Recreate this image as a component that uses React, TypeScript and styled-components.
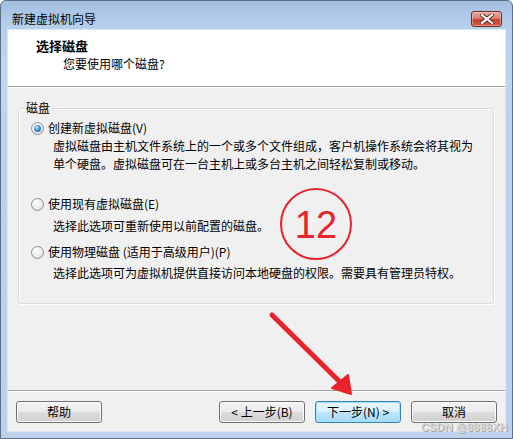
import React from 'react';
import styled, { createGlobalStyle, css } from 'styled-components';

const GlobalStyle = createGlobalStyle`
  html, body {
    margin: 0;
    padding: 0;
    background: #ffffff;
  }
  body {
    font-family: "Noto Sans CJK SC", "Liberation Sans", sans-serif;
    font-size: 12px;
    color: #000;
  }
`;

const Window = styled.div`
  position: relative;
  width: 513px;
  height: 439px;
  box-sizing: border-box;
  display: flex;
  flex-direction: column;
  border: 1px solid #5d6f86;
  border-radius: 6px 6px 0 0;
  background: linear-gradient(to bottom, #a3bfe1 0px, #b6cfeb 26px, #bdd4ed 60px, #bad2ec 100%);
  overflow: hidden;
`;

const TitleBar = styled.div`
  height: 29px;
  flex: none;
  display: flex;
  align-items: flex-start;
  justify-content: space-between;
  box-sizing: border-box;
  padding: 10px 10px 0 11px;
`;

const TitleText = styled.div`
  line-height: 16px;
  color: #000;
`;

const CloseButton = styled.div`
  width: 31px;
  height: 16px;
  box-sizing: border-box;
  border: 1px solid #6e2b22;
  border-radius: 3px;
  background: linear-gradient(to bottom, #e8a89b 0%, #d9806e 45%, #c2402c 55%, #cf5c43 100%);
  box-shadow: inset 0 0 0 1px rgba(255, 220, 210, 0.45);
  display: flex;
  align-items: center;
  justify-content: center;
`;

const Client = styled.div`
  flex: 1;
  margin: 0 7px 7px;
  display: flex;
  flex-direction: column;
  background: #f0f0f0;
  box-shadow: 0 0 0 1px #dce7f4;
`;

const Header = styled.div`
  height: 57px;
  flex: none;
  box-sizing: border-box;
  background: #ffffff;
  padding: 8px 0 0 28px;
  border-bottom: 1px solid #a0a0a0;
  box-shadow: 0 1px 0 #ffffff;
`;

const HeaderTitle = styled.div`
  font-size: 13px;
  font-weight: bold;
  line-height: 16px;
`;

const HeaderSub = styled.div`
  line-height: 16px;
  margin: 2px 0 0 27px;
`;

const Body = styled.div`
  flex: 1;
  padding: 13px 11px 0 10px;
`;

const Group = styled.fieldset`
  margin: 0;
  padding: 0 0 21px 0;
  border: 1px solid #d5dfe5;
  border-radius: 3px;
  box-shadow: inset 1px 1px 0 #ffffff, 1px 1px 0 #ffffff;
`;

const Legend = styled.legend`
  margin-left: 5px;
  padding: 0 2px;
  line-height: 16px;
`;

const Option = styled.div<{ $top: number }>`
  margin-top: ${(p) => p.$top}px;
`;

const RadioRow = styled.div`
  height: 18px;
  display: flex;
  align-items: center;
  gap: 4px;
  padding-left: 12px;
`;

const Radio = styled.span<{ $checked?: boolean }>`
  width: 13px;
  height: 13px;
  box-sizing: border-box;
  border-radius: 50%;
  border: 1px solid #8f8f8f;
  background: radial-gradient(circle at 40% 35%, #ffffff 0%, #f0f0f0 45%, #d2d2d2 100%);
  display: flex;
  align-items: center;
  justify-content: center;
  ${(p) =>
    p.$checked &&
    css`
      &::after {
        content: '';
        width: 7px;
        height: 7px;
        border-radius: 50%;
        background: radial-gradient(circle at 40% 35%, #c8ecff 0%, #3d95d3 45%, #1b5a8c 100%);
      }
    `}
`;

const Label = styled.span`
  line-height: 18px;
`;

const Desc = styled.div<{ $gap: number }>`
  margin-top: ${(p) => p.$gap}px;
  padding-left: 34px;
  line-height: 18px;
  white-space: nowrap;
`;

const Footer = styled.div`
  height: 41px;
  flex: none;
  box-sizing: border-box;
  border-top: 1px solid #a0a0a0;
  box-shadow: inset 0 1px 0 #ffffff;
  padding: 10px 8px 0 8px;
  display: flex;
  justify-content: space-between;
  align-items: flex-start;
`;

const ButtonGroup = styled.div`
  display: flex;
  gap: 10px;
`;

const Button = styled.div<{ $default?: boolean }>`
  width: 86px;
  height: 22px;
  box-sizing: border-box;
  border: 1px solid #707070;
  border-radius: 3px;
  background: linear-gradient(to bottom, #f2f2f2 0%, #ebebeb 50%, #dddddd 51%, #cfcfcf 100%);
  box-shadow: inset 0 0 0 1px #fcfcfc;
  display: flex;
  align-items: center;
  justify-content: center;
  line-height: 16px;
  ${(p) =>
    p.$default &&
    css`
      border-color: #3c7fb1;
      background: linear-gradient(to bottom, #eaf6fd 0%, #d9f0fc 50%, #bee6fd 51%, #a7d9f5 100%);
      box-shadow: inset 0 0 0 1px #9fe3fb;
    `}
`;

const Annotation = styled.svg`
  position: absolute;
  left: 0;
  top: 0;
  pointer-events: none;
`;

const Watermark = styled.div`
  position: absolute;
  right: 4px;
  bottom: 5px;
  font-family: "Liberation Sans", Arial, sans-serif;
  font-size: 11px;
  font-weight: bold;
  color: #d8d8d8;
  text-shadow: 1px 1px 0 #a8a8a8;
  letter-spacing: 0.2px;
`;

const options = [
  {
    label: '创建新虚拟磁盘(V)',
    lines: ['虚拟磁盘由主机文件系统上的一个或多个文件组成，客户机操作系统会将其视为', '单个硬盘。虚拟磁盘可在一台主机上或多台主机之间轻松复制或移动。'],
    checked: true,
    top: 3,
    gap: 0,
  },
  {
    label: '使用现有虚拟磁盘(E)',
    lines: ['选择此选项可重新使用以前配置的磁盘。'],
    top: 22,
    gap: 4,
  },
  {
    label: '使用物理磁盘 (适用于高级用户)(P)',
    lines: ['选择此选项可为虚拟机提供直接访问本地硬盘的权限。需要具有管理员特权。'],
    top: 8,
    gap: 3,
  },
];

export default function App() {
  return (
    <>
      <GlobalStyle />
      <Window>
        <TitleBar>
          <TitleText>新建虚拟机向导</TitleText>
          <CloseButton>
            <svg width="14" height="10" viewBox="0 0 14 10">
              <path d="M2 1 L12 9 M12 1 L2 9" stroke="#5a2a24" strokeWidth="4" strokeLinecap="square" />
              <path d="M2 1 L12 9 M12 1 L2 9" stroke="#ffffff" strokeWidth="2.2" strokeLinecap="square" />
            </svg>
          </CloseButton>
        </TitleBar>
        <Client>
          <Header>
            <HeaderTitle>选择磁盘</HeaderTitle>
            <HeaderSub>您要使用哪个磁盘?</HeaderSub>
          </Header>
          <Body>
            <Group>
              <Legend>磁盘</Legend>
              {options.map((o) => (
                <Option key={o.label} $top={o.top}>
                  <RadioRow>
                    <Radio $checked={o.checked} />
                    <Label>{o.label}</Label>
                  </RadioRow>
                  <Desc $gap={o.gap}>
                    {o.lines.map((l, i) => (
                      <div key={i}>{l}</div>
                    ))}
                  </Desc>
                </Option>
              ))}
            </Group>
          </Body>
          <Footer>
            <Button>帮助</Button>
            <ButtonGroup>
              <Button>&lt; 上一步(B)</Button>
              <Button $default>下一步(N) &gt;</Button>
              <Button>取消</Button>
            </ButtonGroup>
          </Footer>
        </Client>
        <Annotation width="513" height="439" viewBox="0 0 513 439">
          <circle cx="315" cy="223" r="35" fill="none" stroke="#e8232b" strokeWidth="2" />
          <text
            x="315"
            y="237"
            textAnchor="middle"
            fontFamily="Liberation Sans, Arial, sans-serif"
            fontSize="38"
            fill="#e8232b"
          >
            12
          </text>
          <line x1="271" y1="314" x2="340" y2="382" stroke="#e8232b" strokeWidth="5" strokeLinecap="round" />
          <polygon points="350,393 331,387 347,374" fill="#e8232b" stroke="#e8232b" strokeWidth="2" strokeLinejoin="round" />
        </Annotation>
        <Watermark>CSDN @8888XH</Watermark>
      </Window>
    </>
  );
}
